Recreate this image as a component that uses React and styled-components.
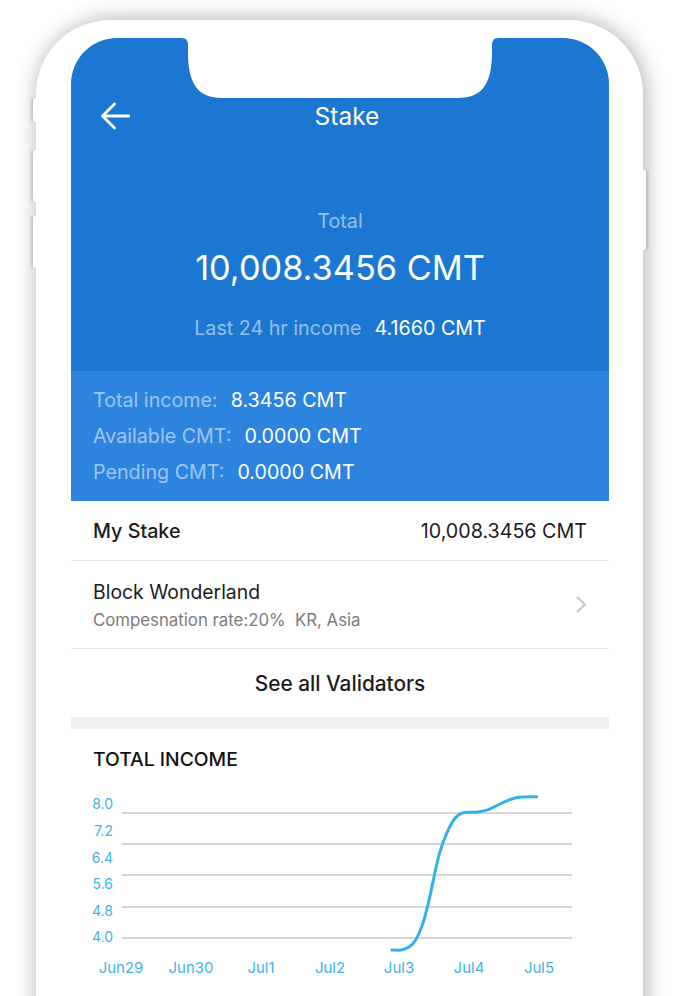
import React from 'react';
import styled, { createGlobalStyle } from 'styled-components';

const Global = createGlobalStyle`
  html, body { margin: 0; padding: 0; background: #fff; }
  body { font-family: Inter, "Noto Sans", "Liberation Sans", sans-serif; -webkit-font-smoothing: antialiased; }
  #root { width: 678px; height: 996px; overflow: hidden; }
  * { box-sizing: border-box; }
`;

const Stage = styled.div`
  width: 678px;
  height: 996px;
  overflow: hidden;
  padding: 20px 35px 0 36px;
  background: #fff;
`;

const Phone = styled.div`
  position: relative;
  width: 607px;
  height: 1100px;
  background: #fff;
  border-radius: 74px 74px 0 0;
  box-shadow: 2px 0 22px rgba(0, 0, 0, 0.32);
  padding: 18px 34px 0 35px;
`;

const SideButton = styled.span`
  position: absolute;
  top: ${(p) => p.$top}px;
  height: ${(p) => p.$h}px;
  width: 4px;
  background: #fff;
  ${(p) => (p.$right ? 'right: -3px;' : 'left: -3px;')}
  box-shadow: ${(p) => (p.$right ? '2px 0 3px rgba(0,0,0,0.16)' : '-2px 0 3px rgba(0,0,0,0.16)')};
  border-radius: 2px;
`;

const Screen = styled.div`
  position: relative;
  width: 538px;
  height: 100%;
  background: #fff;
  border-radius: 46px 46px 0 0;
  overflow: hidden;
`;

const Notch = styled.svg`
  position: absolute;
  top: 0;
  left: 111px;
  width: 316px;
  height: 60px;
  display: block;
`;

const Header = styled.header`
  background: #1b77d2;
  color: #fff;
  padding: 60px 0 32px;
  display: flex;
  flex-direction: column;
  align-items: center;
`;

const NavBar = styled.div`
  width: 100%;
  height: 36px;
  display: grid;
  grid-template-columns: 1fr auto 1fr;
  align-items: center;
  padding: 0 15px 0 29px;
`;

const BackButton = styled.button`
  justify-self: start;
  border: 0;
  padding: 0;
  background: none;
  display: flex;
  cursor: pointer;
`;

const Title = styled.h1`
  margin: 0;
  font-size: 24.5px;
  font-weight: 400;
  line-height: 36px;
  color: #fff;
`;

const MutedLabel = styled.div`
  margin-top: ${(p) => p.$mt || 0}px;
  font-size: 19.7px;
  line-height: 22px;
  color: rgba(255, 255, 255, 0.55);
`;

const BigAmount = styled.div`
  margin-top: 16px;
  font-size: 34.3px;
  line-height: 40px;
  font-weight: 400;
  color: #fff;
`;

const IncomeLine = styled.div`
  margin-top: 29px;
  display: flex;
  gap: 13px;
  font-size: 19.7px;
  line-height: 22px;
`;

const Muted = styled.span`
  color: rgba(255, 255, 255, 0.55);
`;

const Value = styled.span`
  color: #fff;
`;

const Band = styled.section`
  background: #2c84df;
  padding: 11px 22px;
`;

const BandRow = styled.div`
  display: flex;
  gap: 13px;
  font-size: 19.7px;
  line-height: 36px;
`;

const StakeRow = styled.div`
  height: 60px;
  padding: 0 22px;
  display: flex;
  align-items: center;
  justify-content: space-between;
  border-bottom: 1px solid #e6e6e6;
  font-size: 19.7px;
  color: #1c1c1c;
`;

const StakeLabel = styled.span`
  font-weight: 500;
`;

const ValidatorRow = styled.div`
  height: 88px;
  padding: 0 22px;
  display: flex;
  align-items: center;
  justify-content: space-between;
  border-bottom: 1px solid #e6e6e6;
`;

const ValidatorInfo = styled.div`
  display: flex;
  flex-direction: column;
  gap: 6px;
`;

const ValidatorName = styled.div`
  font-size: 19.4px;
  line-height: 24px;
  color: #1c1c1c;
`;

const ValidatorMeta = styled.div`
  font-size: 16.8px;
  line-height: 20px;
  color: #7b7b7b;
`;

const SeeAll = styled.button`
  width: 100%;
  height: 68px;
  border: 0;
  background: #fff;
  font-family: inherit;
  font-size: 20.8px;
  font-weight: 500;
  color: #1c1c1c;
  cursor: pointer;
`;

const Spacer = styled.div`
  height: 12px;
  background: #f0f0f0;
`;

const ChartSection = styled.section`
  padding-top: 19px;
`;

const ChartTitle = styled.h2`
  margin: 0;
  padding-left: 22px;
  font-size: 19.3px;
  line-height: 22px;
  font-weight: 500;
  color: #111;
`;

const ChartSvg = styled.svg`
  display: block;
  margin-top: 10px;
  width: 538px;
  height: 210px;
  overflow: visible;
`;

const yLabels = [
  ['8.0', 23],
  ['7.2', 50],
  ['6.4', 77],
  ['5.6', 103],
  ['4.8', 130],
  ['4.0', 156],
];
const gridYs = [33, 64, 95, 127, 158];
const xLabels = [
  ['Jun29', 50],
  ['Jun30', 120],
  ['Jul1', 190],
  ['Jul2', 259],
  ['Jul3', 328],
  ['Jul4', 398],
  ['Jul5', 468],
];
const curvePts = [
  [320.7, 170],
  [332.3, 169.6],
  [342.3, 163.3],
  [350.7, 146.7],
  [357.3, 123.3],
  [363, 96.7],
  [369, 71.7],
  [375.7, 53.3],
  [384, 38.3],
  [392.3, 32.6],
  [405.7, 32.2],
  [417.3, 29.6],
  [429, 24],
  [442.3, 18.5],
  [452.3, 16.9],
  [465.7, 16.7],
];

function smoothPath(pts) {
  let d = `M${pts[0][0]},${pts[0][1]}`;
  for (let i = 0; i < pts.length - 1; i++) {
    const p0 = pts[i - 1] || pts[i];
    const p1 = pts[i];
    const p2 = pts[i + 1];
    const p3 = pts[i + 2] || p2;
    const c1x = p1[0] + (p2[0] - p0[0]) / 6;
    const c1y = p1[1] + (p2[1] - p0[1]) / 6;
    const c2x = p2[0] - (p3[0] - p1[0]) / 6;
    const c2y = p2[1] - (p3[1] - p1[1]) / 6;
    d += ` C${c1x.toFixed(1)},${c1y.toFixed(1)} ${c2x.toFixed(1)},${c2y.toFixed(1)} ${p2[0]},${p2[1]}`;
  }
  return d;
}

const AXIS = '#3fb3ea';

function IncomeChart() {
  return (
    <ChartSvg viewBox="0 0 538 210">
      {gridYs.map((y) => (
        <line key={y} x1="51" x2="501" y1={y} y2={y} stroke="#c9c9c9" strokeWidth="1.5" />
      ))}
      {yLabels.map(([t, y]) => (
        <text key={t} x="42" y={y} textAnchor="end" dominantBaseline="central" fill={AXIS} fontSize="14" fontFamily="Inter, sans-serif">
          {t}
        </text>
      ))}
      {xLabels.map(([t, x]) => (
        <text key={t} x={x} y="187" textAnchor="middle" dominantBaseline="central" fill={AXIS} fontSize="15" fontFamily="Inter, sans-serif">
          {t}
        </text>
      ))}
      <path d={smoothPath(curvePts)} fill="none" stroke="#35b1e8" strokeWidth="3" strokeLinecap="round" />
    </ChartSvg>
  );
}

export default function App() {
  return (
    <>
      <Global />
      <Stage>
        <Phone>
          <SideButton $top={78} $h={24} />
          <SideButton $top={130} $h={52} />
          <SideButton $top={196} $h={52} />
          <SideButton $right $top={150} $h={80} />
          <Screen>
            <Header>
              <NavBar>
                <BackButton aria-label="Back">
                  <svg width="30" height="30" viewBox="0 0 30 30" fill="none">
                    <path d="M2.5 15H29M14.5 3L2.5 15L14.5 27" stroke="#fff" strokeWidth="2.8" strokeLinecap="round" strokeLinejoin="round" />
                  </svg>
                </BackButton>
                <Title>Stake</Title>
                <span />
              </NavBar>
              <MutedLabel $mt={76}>Total</MutedLabel>
              <BigAmount>10,008.3456 CMT</BigAmount>
              <IncomeLine>
                <Muted>Last 24 hr income</Muted>
                <Value>4.1660 CMT</Value>
              </IncomeLine>
            </Header>
            <Band>
              <BandRow>
                <Muted>Total income:</Muted>
                <Value>8.3456 CMT</Value>
              </BandRow>
              <BandRow>
                <Muted>Available CMT:</Muted>
                <Value>0.0000 CMT</Value>
              </BandRow>
              <BandRow>
                <Muted>Pending CMT:</Muted>
                <Value>0.0000 CMT</Value>
              </BandRow>
            </Band>
            <StakeRow>
              <StakeLabel>My Stake</StakeLabel>
              <span>10,008.3456 CMT</span>
            </StakeRow>
            <ValidatorRow>
              <ValidatorInfo>
                <ValidatorName>Block Wonderland</ValidatorName>
                <ValidatorMeta>Compesnation rate:20%&nbsp;&nbsp;KR, Asia</ValidatorMeta>
              </ValidatorInfo>
              <svg width="11" height="17" viewBox="0 0 11 17" fill="none">
                <path d="M1.5 1.5L9 8.5L1.5 15.5" stroke="#c4c4c4" strokeWidth="2" strokeLinecap="round" strokeLinejoin="round" />
              </svg>
            </ValidatorRow>
            <SeeAll>See all Validators</SeeAll>
            <Spacer />
            <ChartSection>
              <ChartTitle>TOTAL INCOME</ChartTitle>
              <IncomeChart />
            </ChartSection>
            <Notch viewBox="0 0 316 60">
              <path d="M0,0 Q6,0 6,7 L6,14 C6,46 16,60 40,60 L276,60 C300,60 310,46 310,14 L310,7 Q310,0 316,0 Z" fill="#fff" />
            </Notch>
          </Screen>
        </Phone>
      </Stage>
    </>
  );
}
